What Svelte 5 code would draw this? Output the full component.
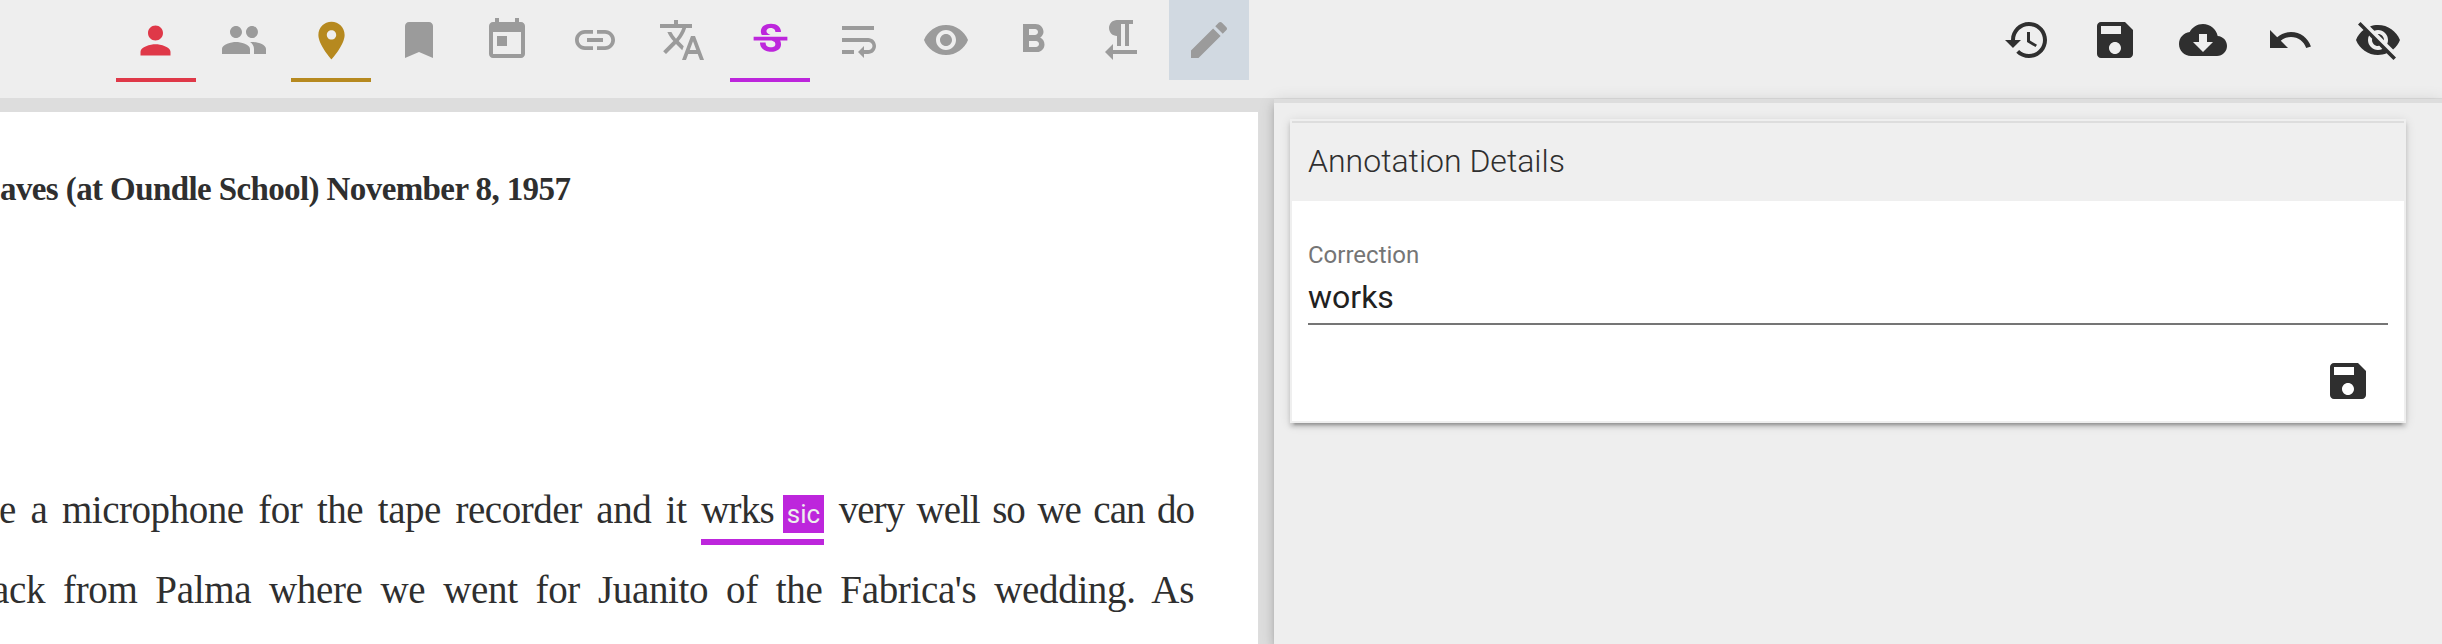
<script>
  const tools = [
    { name: 'Person', color: '#df3848', size: 45, d: 'M12 12c2.21 0 4-1.79 4-4s-1.79-4-4-4-4 1.79-4 4 1.79 4 4 4zm0 2c-2.67 0-8 1.34-8 4v2h16v-2c0-2.66-5.33-4-8-4z' },
    { name: 'Organization', d: 'M16 11c1.66 0 2.99-1.34 2.99-3S17.66 5 16 5s-3 1.34-3 3 1.34 3 3 3zm-8 0c1.66 0 2.99-1.34 2.99-3S9.66 5 8 5 5 6.34 5 8s1.34 3 3 3zm0 2c-2.33 0-7 1.17-7 3.5V19h14v-2.5C15 14.17 10.33 13 8 13zm8 0c-.29 0-.62.02-.97.05 1.16.84 1.97 1.97 1.97 3.45V19h6v-2.5c0-2.33-4.67-3.5-7-3.5z' },
    { name: 'Place', color: '#b6891f', size: 45, d: 'M12 2C8.13 2 5 5.13 5 9c0 5.25 7 13 7 13s7-7.75 7-13c0-3.87-3.13-7-7-7zm0 9.5c-1.38 0-2.5-1.12-2.5-2.5S10.620 6.5 12 6.500s2.500 1.120 2.500 2.500-1.120 2.500-2.500 2.500z' },
    { name: 'Bookmark', d: 'M17 3H7c-1.1 0-1.99.9-1.99 2L5 21l7-3 7 3V5c0-1.1-.9-2-2-2z' },
    { name: 'Date', d: 'M19 3h-1V1h-2v2H8V1H6v2H5c-1.11 0-1.99.9-1.99 2L3 19c0 1.1.89 2 2 2h14c1.1 0 2-.9 2-2V5c0-1.1-.9-2-2-2zm0 16H5V8h14v11zM7 10h5v5H7z' },
    { name: 'Link', d: 'M3.9 12c0-1.71 1.39-3.1 3.1-3.1h4V7H7c-2.76 0-5 2.24-5 5s2.240 5 5 5h4v-1.900H7c-1.710 0-3.100-1.390-3.100-3.100zM8 13h8v-2H8v2zm9-6h-4v1.900h4c1.710 0 3.100 1.390 3.100 3.100s-1.390 3.100-3.100 3.100h-4V17h4c2.760 0 5-2.240 5-5s-2.240-5-5-5z' },
    { name: 'Language', d: 'M12.87 15.07l-2.54-2.51.03-.03c1.74-1.94 2.98-4.17 3.71-6.53H17V4h-7V2H8v2H1v1.990h11.170C11.500 7.920 10.440 9.750 9 11.350 8.070 10.320 7.300 9.190 6.690 8h-2c.73 1.630 1.730 3.170 2.980 4.560l-5.090 5.020L4 19l5-5 3.110 3.110.760-2.040zM18.500 10h-2L12 22h2l1.120-3h4.750L21 22h2l-4.500-12zm-2.620 7l1.620-4.330L19.120 17h-3.240z' },
    { name: 'Correction', color: '#bd26dc', size: 45, d: 'M7.24 8.75c-.26-.48-.39-1.03-.39-1.67 0-.61.13-1.16.4-1.67.26-.5.63-.93 1.11-1.29.48-.35 1.05-.63 1.7-.83.66-.19 1.39-.29 2.18-.29.81 0 1.54.11 2.21.34.66.22 1.23.54 1.69.94.47.4.83.88 1.08 1.43.25.55.38 1.15.38 1.81h-3.01c0-.31-.05-.59-.15-.85-.09-.27-.24-.49-.44-.68-.2-.19-.45-.33-.75-.44-.3-.1-.66-.16-1.06-.16-.39 0-.74.04-1.03.13-.29.09-.53.21-.72.36-.19.16-.34.34-.44.55-.1.21-.15.43-.15.66 0 .48.25.88.74 1.21.38.25.77.48 1.41.7H7.39c-.05-.08-.11-.17-.15-.25zM21 12v-2H3v2h9.62c.18.07.4.14.55.2.37.17.66.34.87.51.21.17.35.36.43.57.07.2.11.43.11.69 0 .23-.05.45-.14.66-.09.2-.23.38-.42.53-.19.15-.42.26-.71.35-.29.08-.63.13-1.01.13-.43 0-.83-.04-1.18-.13s-.66-.23-.91-.42c-.25-.19-.45-.44-.59-.75-.14-.31-.25-.76-.25-1.21H6.4c0 .55.08 1.13.24 1.58.16.45.37.85.65 1.21.28.35.6.66.98.92.37.26.78.48 1.22.65.44.17.9.3 1.38.39.48.08.96.13 1.44.13.8 0 1.53-.09 2.18-.28s1.21-.45 1.67-.79c.46-.34.82-.77 1.07-1.27s.38-1.07.38-1.71c0-.6-.1-1.14-.31-1.61-.05-.11-.11-.23-.17-.33H21z' },
    { name: 'Line wrap', d: 'M4 19h6v-2H4v2zM20 5H4v2h16V5zm-3 6H4v2h13.250c1.100 0 2 .9 2 2s-.9 2-2 2H15v-2l-3 3 3 3v-2h2c2.210 0 4-1.790 4-4s-1.790-4-4-4z' },
    { name: 'View', d: 'M12 4.500C7 4.500 2.730 7.610 1 12c1.730 4.390 6 7.500 11 7.500s9.270-3.110 11-7.500c-1.730-4.390-6-7.500-11-7.500zM12 17c-2.760 0-5-2.240-5-5s2.240-5 5-5 5 2.240 5 5-2.240 5-5 5zm0-8c-1.660 0-3 1.340-3 3s1.340 3 3 3 3-1.340 3-3-1.340-3-3-3z' },
    { name: 'Bold', d: 'M15.600 10.790c.97-.67 1.650-1.770 1.650-2.790 0-2.260-1.750-4-4-4H7v14h7.040c2.090 0 3.710-1.700 3.710-3.790 0-1.520-.86-2.820-2.150-3.420zM10 6.500h3c.83 0 1.500.67 1.500 1.500s-.67 1.500-1.500 1.500h-3v-3zm3.500 9H10v-3h3.500c.83 0 1.500.67 1.500 1.500s-.67 1.500-1.500 1.500z' },
    { name: 'Paragraph', d: 'M10 10v5h2V4h2v11h2V4h2V2h-8C7.790 2 6 3.790 6 6s1.790 4 4 4zm-2 7v-3l-4 4 4 4v-3h12v-2H8z' },
    { name: 'Edit', active: true, d: 'M3 17.250V21h3.750L17.810 9.940l-3.750-3.750L3 17.250zM20.710 7.040c.39-.39.39-1.020 0-1.410l-2.340-2.340c-.39-.39-1.020-.39-1.410 0l-1.830 1.830 3.750 3.750 1.830-1.830z' }
  ];

  const save = 'M17 3H5c-1.110 0-2 .9-2 2v14c0 1.100.89 2 2 2h14c1.100 0 2-.9 2-2V7l-4-4zm-5 16c-1.660 0-3-1.340-3-3s1.340-3 3-3 3 1.340 3 3-1.340 3-3 3zm3-10H5V5h10v4z';

  const actions = [
    { name: 'History', d: 'M13 3c-4.970 0-9 4.030-9 9H1l3.890 3.890.07.14L9 12H6c0-3.870 3.130-7 7-7s7 3.130 7 7-3.130 7-7 7c-1.930 0-3.680-.79-4.940-2.060l-1.420 1.420C8.270 19.990 10.510 21 13 21c4.970 0 9-4.030 9-9s-4.030-9-9-9zm-1 5v5l4.280 2.540.72-1.210-3.500-2.080V8H12z' },
    { name: 'Save', d: save },
    { name: 'Download', d: 'M19.350 10.040C18.670 6.590 15.640 4 12 4 9.110 4 6.600 5.640 5.350 8.040 2.340 8.360 0 10.910 0 14c0 3.310 2.690 6 6 6h13c2.760 0 5-2.240 5-5 0-2.640-2.050-4.780-4.650-4.960zM17 13l-5 5-5-5h3V9h4v4h3z' },
    { name: 'Undo', d: 'M12.500 8c-2.650 0-5.050.99-6.900 2.600L2 7v9h9l-3.620-3.620c1.390-1.160 3.160-1.880 5.120-1.880 3.540 0 6.550 2.310 7.600 5.500l2.370-.78C21.080 11.030 17.150 8 12.500 8z' },
    { name: 'Hide annotations', d: 'M12 7c2.760 0 5 2.240 5 5 0 .65-.13 1.260-.36 1.830l2.920 2.920c1.510-1.260 2.700-2.890 3.430-4.750-1.730-4.390-6-7.500-11-7.500-1.400 0-2.740.25-3.980.7l2.160 2.160C10.740 7.130 11.350 7 12 7zM2 4.270l2.280 2.280.46.46C3.080 8.300 1.780 10.020 1 12c1.730 4.390 6 7.500 11 7.500 1.550 0 3.030-.3 4.380-.84l.42.42L19.730 22 21 20.730 3.270 3 2 4.270zM7.530 9.800l1.550 1.550c-.05.21-.08.43-.08.65 0 1.660 1.340 3 3 3 .22 0 .44-.03.65-.08l1.550 1.550c-.67.33-1.410.53-2.200.53-2.760 0-5-2.240-5-5 0-.79.2-1.530.53-2.200zm4.310-.78l3.150 3.150.02-.16c0-1.660-1.340-3-3-3l-.17.01z' }
  ];
</script>

<div class="app">
  <header>
    <nav class="tools">
      {#each tools as tool}
        <button class="tool" class:marked={tool.color} class:active={tool.active} aria-label={tool.name} style:color={tool.color}>
          <svg width={tool.size ?? 48} height={tool.size ?? 48} viewBox="0 0 24 24" fill="currentColor"><path d={tool.d} /></svg>
        </button>
      {/each}
    </nav>
    <nav class="actions">
      {#each actions as action}
        <button class="action" aria-label={action.name}>
          <svg width="48" height="48" viewBox="0 0 24 24" fill="currentColor"><path d={action.d} /></svg>
        </button>
      {/each}
    </nav>
  </header>

  <main>
    <article>
      <h1>aves (at Oundle School) November 8, 1957</h1>
      <p class="first">ve a microphone for the tape recorder and it <span class="sic">wrks<span class="chip">sic</span></span> <span class="tail">very well so we can do</span></p>
      <p class="second">ack from Palma where we went for Juanito of the Fabrica's wedding. As</p>
    </article>

    <aside>
      <section class="card">
        <h2>Annotation Details</h2>
        <div class="body">
          <label for="correction">Correction</label>
          <input id="correction" value="works" />
          <div class="foot">
            <button class="action" aria-label="Save correction">
              <svg width="48" height="48" viewBox="0 0 24 24" fill="currentColor"><path d={save} /></svg>
            </button>
          </div>
        </div>
      </section>
    </aside>
  </main>
</div>

<style>
  :global(body) { overflow: hidden; }
  .app {
    display: flex;
    flex-direction: column;
    width: 2442px;
    height: 644px;
    overflow: hidden;
    background: #ddd;
    color: #2f2f2f;
    font-family: Roboto, sans-serif;
  }
  button { border: 0; padding: 0; background: none; color: inherit; }
  svg { display: block; }
  header {
    display: flex;
    justify-content: space-between;
    flex: none;
    box-sizing: border-box;
    height: 98px;
    padding: 0 24px 0 115.8px;
    background: #eee;
  }
  .tools, .actions { display: flex; gap: 7.75px; }
  .tools { color: #9b9b9b; }
  .tool, .action {
    position: relative;
    display: flex;
    align-items: center;
    justify-content: center;
    flex: none;
    width: 80px;
    height: 80px;
  }
  .marked::after {
    content: '';
    position: absolute;
    left: 0;
    right: 0;
    bottom: -2px;
    height: 4px;
    background: currentColor;
  }
  .active { background: #d1d9e1; }
  main { display: flex; justify-content: space-between; flex: 1; }
  article {
    box-sizing: border-box;
    width: 1258px;
    margin-top: 14px;
    padding: 57px 64px 0 0;
    background: #fff;
    font-family: "Liberation Serif", serif;
    overflow: hidden;
  }
  h1 {
    margin: 0 0 261px;
    font-size: 33px;
    line-height: 40px;
    letter-spacing: -0.6px;
    white-space: nowrap;
  }
  p {
    margin: 0;
    height: 80px;
    font-size: 39px;
    line-height: 80px;
    letter-spacing: -0.35px;
    text-align-last: justify;
    white-space: nowrap;
  }
  .first { margin-left: -20px; letter-spacing: -0.45px; }
  .second { margin-left: -8px; }
  .tail { letter-spacing: -1px; word-spacing: -1.5px; }
  .sic {
    display: inline-block;
    height: 55px;
    line-height: 51px;
    border-bottom: 6px solid #bd26dc;
    letter-spacing: -0.8px;
    text-align-last: left;
  }
  .chip {
    display: inline-block;
    height: 38px;
    margin-left: 9px;
    padding: 0 4px;
    background: #bd26dc;
    color: #eee;
    font: 26px/38px Roboto, sans-serif;
    letter-spacing: 0;
  }
  aside {
    box-sizing: border-box;
    width: 1168px;
    margin-top: 1px;
    padding: 16px 36px 0 16px;
    border-top: 4px solid #ddd;
    background: #eee;
    box-shadow: 0 6px 6px -4px rgba(0, 0, 0, .2), 0 6px 8px rgba(0, 0, 0, .14), 0 2px 16px rgba(0, 0, 0, .12);
  }
  .card {
    box-sizing: border-box;
    height: 304px;
    border: 2px solid #efefef;
    background: #fff;
    box-shadow: 0 6px 2px -4px rgba(0, 0, 0, .2), 0 4px 4px rgba(0, 0, 0, .14), 0 2px 10px rgba(0, 0, 0, .12);
  }
  h2 {
    box-sizing: border-box;
    height: 80px;
    margin: 0;
    padding-left: 16px;
    border-top: 2px solid #ddd;
    background: #efefef;
    font-size: 32px;
    font-weight: 300;
    line-height: 76px;
  }
  .body { display: flex; flex-direction: column; padding: 39px 16px 0; }
  label { color: #757575; font-size: 24px; line-height: 30px; }
  input {
    box-sizing: border-box;
    height: 55px;
    padding: 0;
    border: 0;
    border-bottom: 2px solid #757575;
    border-radius: 0;
    outline: 0;
    background: none;
    color: #212121;
    font: 32px Roboto, sans-serif;
  }
  .foot { display: flex; justify-content: flex-end; padding-top: 16px; }
</style>
